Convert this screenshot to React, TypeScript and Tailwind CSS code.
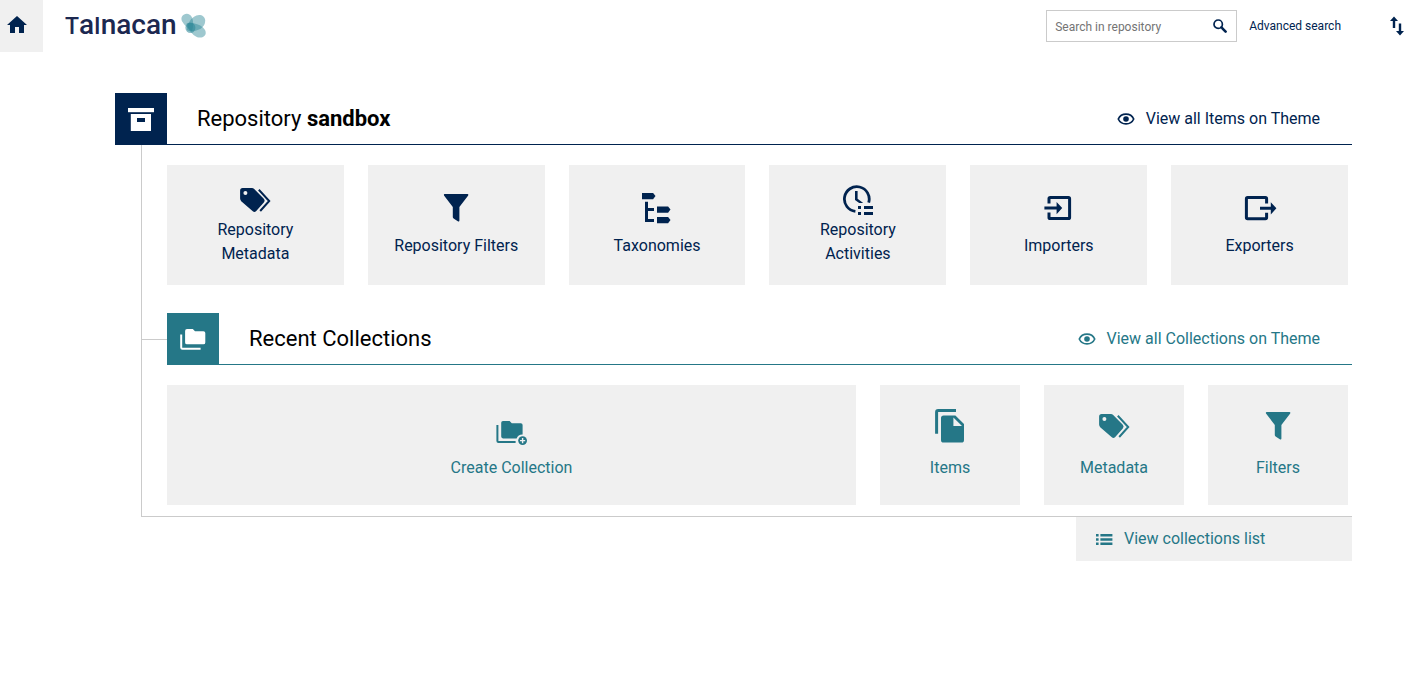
import React from 'react';

type IconProps = {
    className?: string;
};

type Tile = {
    label: string;
    icon: React.ReactNode;
};

const TagsIcon: React.FC = () => (
    <svg viewBox="0 0 32 32" className="w-8 h-8" fill="currentColor" aria-hidden="true">
        <path
            fillRule="evenodd"
            d="M3.6 3H13Q14.2 3 15.2 4L24.8 13.8Q26.4 15.6 24.8 17.4L17 26.2Q15.4 27.8 13.8 26.2L2.2 16.2Q1.1 15 1.1 13.6V5.6Q1.1 3 3.6 3ZM6.4 6A2 2 0 1 0 6.4 10A2 2 0 1 0 6.4 6Z"
        />
        <path d="M19.8 4.8L30.2 16L21.2 26" fill="none" stroke="currentColor" strokeWidth="2" />
    </svg>
);

const FilterIcon: React.FC = () => (
    <svg viewBox="0 0 32 32" className="w-8 h-8" fill="currentColor" aria-hidden="true">
        <path d="M4.8 1H27.4Q28.8 1 28.2 2.4L19.4 14V27.4Q19.4 28.8 18.2 28.4L13.6 25.4Q12.8 24.8 12.8 24V14L4 2.4Q3.4 1 4.8 1Z" />
    </svg>
);

const TaxonomiesIcon: React.FC = () => (
    <svg viewBox="0 0 32 32" className="w-8 h-8" fill="currentColor" aria-hidden="true">
        <path d="M1 0H12.1L14.5 3.1L12.1 6.2H1Z" />
        <path d="M4 8.8H7V15H13V18H7V26H13V29H4Z" />
        <path d="M16 13.4H27.1L29.5 16.6L27.1 19.8H16Z" />
        <path d="M16 24H27.1L29.5 27.1L27.1 30.2H16Z" />
    </svg>
);

const ActivitiesIcon: React.FC = () => (
    <svg viewBox="0 0 32 32" className="w-8 h-8" fill="currentColor" aria-hidden="true">
        <path d="M13.4 26.4A12.4 12.4 0 1 1 26.7 17.6" fill="none" stroke="currentColor" strokeWidth="2.8" />
        <path d="M13 6H15.6V13.8L21.2 18H17.2L13 15Z" />
        <path d="M16 21H19V24H16ZM22 21H31V24H22ZM16 27H19V30H16ZM22 27H31V30H22Z" />
    </svg>
);

const ImportIcon: React.FC = () => (
    <svg viewBox="0 0 32 32" className="w-8 h-8" fill="currentColor" aria-hidden="true">
        <path
            d="M6 10.4V5.6Q6 4.4 7.2 4.4H25.4Q26.6 4.4 26.6 5.6V24.4Q26.6 25.6 25.4 25.6H7.2Q6 25.6 6 24.4V19.4"
            fill="none"
            stroke="currentColor"
            strokeWidth="3"
        />
        <path d="M1.4 13.6H13.6V9L19.2 15.1L13.6 21.2V16.6H1.4Z" />
    </svg>
);

const ExportIcon: React.FC = () => (
    <svg viewBox="0 0 32 32" className="w-8 h-8 overflow-visible" fill="currentColor" aria-hidden="true">
        <path
            d="M22.6 10.4V5.8Q22.6 4.6 21.4 4.6H3.6Q2.4 4.6 2.4 5.8V24.6Q2.4 25.8 3.6 25.8H21.4Q22.6 25.8 22.6 24.6V19.8"
            fill="none"
            stroke="currentColor"
            strokeWidth="3"
        />
        <path d="M16 13.8H26.8V9.2L32.4 15.3L26.8 21.4V16.8H16Z" />
    </svg>
);

const CreateCollectionIcon: React.FC = () => (
    <svg viewBox="0 0 32 32" className="w-8 h-8 overflow-visible" fill="currentColor" aria-hidden="true">
        <path d="M1.4 14V30Q1.4 31 2.4 31H19.6" fill="none" stroke="currentColor" strokeWidth="2" />
        <path d="M7 10H13.6L15.8 12.2H24.8Q26.6 12.2 26.6 14V23.4A6.2 6.2 0 0 0 20.6 27.4H7Q5.2 27.4 5.2 25.6V11.8Q5.2 10 7 10Z" />
        <circle cx="26.6" cy="29.6" r="4.4" />
        <path d="M26.6 27V32.2M24 29.6H29.2" stroke="#f0f0f0" strokeWidth="1.4" />
    </svg>
);

const ItemsIcon: React.FC = () => (
    <svg viewBox="0 0 32 32" className="w-8 h-8 overflow-visible" fill="currentColor" aria-hidden="true">
        <path d="M2.6 22.7V1.2Q2.6 -.4 4.2 -.4H22" fill="none" stroke="currentColor" strokeWidth="3" />
        <path
            fillRule="evenodd"
            d="M9.6 4.4H21.4L30 13V29Q30 31.6 27.4 31.6H9.6Q7 31.6 7 29V7Q7 4.4 9.6 4.4ZM19.4 6.6V15H28Z"
        />
    </svg>
);

const CollectionsIcon: React.FC<IconProps> = ({ className }) => (
    <svg viewBox="0 0 26 26" className={className} fill="currentColor" aria-hidden="true">
        <path d="M1.2 8.4V21.6Q1.2 22.8 2.4 22.8H20.6" fill="none" stroke="currentColor" strokeWidth="2" />
        <path d="M7 3H12.8L15 5.2H23.4Q25.3 5.2 25.3 7V16.4Q25.3 18.3 23.4 18.3H7Q5.1 18.3 5.1 16.4V5Q5.1 3 7 3Z" />
    </svg>
);

const ArchiveIcon: React.FC<IconProps> = ({ className }) => (
    <svg viewBox="0 0 26 26" className={className} fill="currentColor" aria-hidden="true">
        <path d="M0 2H26V6.2H0Z" />
        <path fillRule="evenodd" d="M2.8 8H23V25H2.8ZM9 12V16H17V12Z" />
    </svg>
);

const EyeIcon: React.FC = () => (
    <svg viewBox="0 0 18 18" className="w-[18px] h-[18px]" aria-hidden="true">
        <path
            d="M1.3 9C4.2 2.4 13.8 2.4 16.7 9C13.8 15.6 4.2 15.6 1.3 9Z"
            fill="none"
            stroke="currentColor"
            strokeWidth="1.7"
        />
        <circle cx="9" cy="9" r="2.8" fill="currentColor" />
    </svg>
);

const ListIcon: React.FC = () => (
    <svg viewBox="0 0 18 18" className="w-[18px] h-[18px]" fill="currentColor" aria-hidden="true">
        <path d="M1 4H3.6V6.4H1ZM5.4 4H17.4V6.4H5.4ZM1 8.3H3.6V10.7H1ZM5.4 8.3H17.4V10.7H5.4ZM1 12.6H3.6V15H1ZM5.4 12.6H17.4V15H5.4Z" />
    </svg>
);

const repositoryTiles: Tile[] = [
    { label: 'Repository Metadata', icon: <TagsIcon /> },
    { label: 'Repository Filters', icon: <FilterIcon /> },
    { label: 'Taxonomies', icon: <TaxonomiesIcon /> },
    { label: 'Repository Activities', icon: <ActivitiesIcon /> },
    { label: 'Importers', icon: <ImportIcon /> },
    { label: 'Exporters', icon: <ExportIcon /> },
];

const collectionTiles: Tile[] = [
    { label: 'Items', icon: <ItemsIcon /> },
    { label: 'Metadata', icon: <TagsIcon /> },
    { label: 'Filters', icon: <FilterIcon /> },
];

const Logo: React.FC = () => (
    <a href="#" className="flex items-center ml-[22px] text-[#1c2850]">
        <span className="text-[28px] leading-8 font-medium">
            <span className="text-[23px]">T</span>a<span className="text-[23px]">I</span>nacan
        </span>
        <svg viewBox="0 0 26 26" className="w-[26px] h-[26px] ml-1" aria-hidden="true">
            <g fill="#2b8797" fillOpacity="0.46">
                <path d="M1 3.5C3.4 -.6 9 -.2 11 4.4C12.8 8.6 12.4 13.4 11 18.4C6.6 15.4 3 12 1.2 8.6C.2 6.8 .2 5 1 3.5Z" />
                <path d="M15.4 2.6C19.4 1 24 3 24.2 7.6C24.4 12.6 20.4 16.4 14.6 17.8C11 18.6 8 18.4 5.8 17C6.2 10.6 10 4.8 15.4 2.6Z" />
                <path d="M5.6 10.4C11.6 9.4 18 11 22 14.6C26 18.2 25.6 22.8 21.4 24.2C16.6 25.6 12.4 22.4 9.4 18.4C7.4 15.8 6 13 5.6 10.4Z" />
            </g>
            <ellipse cx="9.4" cy="14.8" rx="5" ry="5.2" fill="#2b8797" fillOpacity="0.55" />
        </svg>
    </a>
);

const Header: React.FC = () => (
    <header className="flex items-center h-[52px] pr-[9px] text-[#00234f]">
        <a href="#" aria-label="Home" className="flex items-start w-[43px] h-full pt-4 pl-[7px] bg-[#f0f0f0]">
            <svg viewBox="0 0 20 18" className="w-5 h-[18px]" fill="currentColor" aria-hidden="true">
                <path d="M10 0L20 9H17V17H12V11H8V17H3V9H0Z" />
            </svg>
        </a>
        <Logo />
        <form className="flex items-center ml-auto w-[191px] h-8 border border-[#cbcbcb] bg-white" onSubmit={(e) => e.preventDefault()}>
            <input
                type="search"
                aria-label="Search in repository"
                placeholder="Search in repository"
                className="flex-1 min-w-0 pt-0.5 pl-2 text-xs outline-none placeholder:text-[#747474]"
            />
            <button type="submit" aria-label="Search" className="px-[9px]">
                <svg viewBox="0 0 14 14" className="w-[14px] h-[14px]" fill="none" stroke="currentColor" aria-hidden="true">
                    <circle cx="5.2" cy="5.2" r="4.2" strokeWidth="1.7" />
                    <path d="M8.4 8.4L12.6 12.6" strokeWidth="2.6" strokeLinecap="round" />
                </svg>
            </button>
        </form>
        <a href="#" className="ml-3 text-xs">Advanced search</a>
        <button type="button" aria-label="Import and export" className="ml-12">
            <svg viewBox="0 0 16 20" className="w-4 h-5" fill="currentColor" aria-hidden="true">
                <path d="M5 0.5L9 5H6.2V12H3.8V5H1Z" />
                <path d="M11 19.5L7 15H9.8V7.5H12.2V15H15Z" />
            </svg>
        </button>
    </header>
);

const TileLink: React.FC<{ tile: Tile; labelClass: string }> = ({ tile, labelClass }) => (
    <a href="#" className="flex flex-col items-center justify-center h-[120px] pt-px px-6 bg-[#f0f0f0] text-center">
        {tile.icon}
        <span className={`flex items-end pt-px ${labelClass}`}>{tile.label}</span>
    </a>
);

const App: React.FC = () => {
    return (
        <div className="min-h-screen bg-white font-['Roboto',sans-serif] text-base text-black">
            <Header />

            <main className="pt-[41px] pl-[115px] pr-[62px]">
                <div className="flex h-[52px] border-b border-[#00234f] text-[#00234f]">
                    <div className="flex items-center justify-center w-[52px] bg-[#00234f] text-white">
                        <ArchiveIcon className="w-[26px] h-[26px]" />
                    </div>
                    <h1 className="self-center ml-[30px] text-[22px] text-black">
                        Repository <strong className="font-bold">sandbox</strong>
                    </h1>
                    <a href="#" className="flex items-center gap-[11px] ml-auto mr-8">
                        <EyeIcon />
                        View all Items on Theme
                    </a>
                </div>

                <div className="ml-[26px] pl-[25px] pt-5 pb-[11px] border-l border-b border-[#cbcbcb]">
                    <nav className="grid grid-cols-6 gap-6 pr-1 text-[#00234f]">
                        {repositoryTiles.map((tile) => (
                            <TileLink key={tile.label} tile={tile} labelClass="min-h-[33px]" />
                        ))}
                    </nav>

                    <div className="flex -ml-[25px] mt-7 text-[#257787]">
                        <div className="self-center w-[25px] h-px bg-[#cbcbcb]" />
                        <div className="flex flex-1 h-[52px] border-b border-[#257787]">
                            <div className="flex items-center justify-center w-[52px] bg-[#257787] text-white">
                                <CollectionsIcon className="w-[26px] h-[26px]" />
                            </div>
                            <h2 className="self-center ml-[30px] text-[22px] text-black">Recent Collections</h2>
                            <a href="#" className="flex items-center gap-[11px] ml-auto mr-8">
                                <EyeIcon />
                                View all Collections on Theme
                            </a>
                        </div>
                    </div>

                    <nav className="grid grid-cols-[1fr_140px_140px_140px] gap-6 mt-5 pr-1 text-[#257787]">
                        <TileLink
                            tile={{ label: 'Create Collection', icon: <CreateCollectionIcon /> }}
                            labelClass="min-h-[37px]"
                        />
                        {collectionTiles.map((tile) => (
                            <TileLink key={tile.label} tile={tile} labelClass="min-h-[37px]" />
                        ))}
                    </nav>
                </div>

                <a href="#" className="flex items-center gap-[11px] w-[276px] h-11 ml-auto pl-[19px] bg-[#f0f0f0] text-[#257787]">
                    <ListIcon />
                    View collections list
                </a>
            </main>
        </div>
    );
};

export default App;
